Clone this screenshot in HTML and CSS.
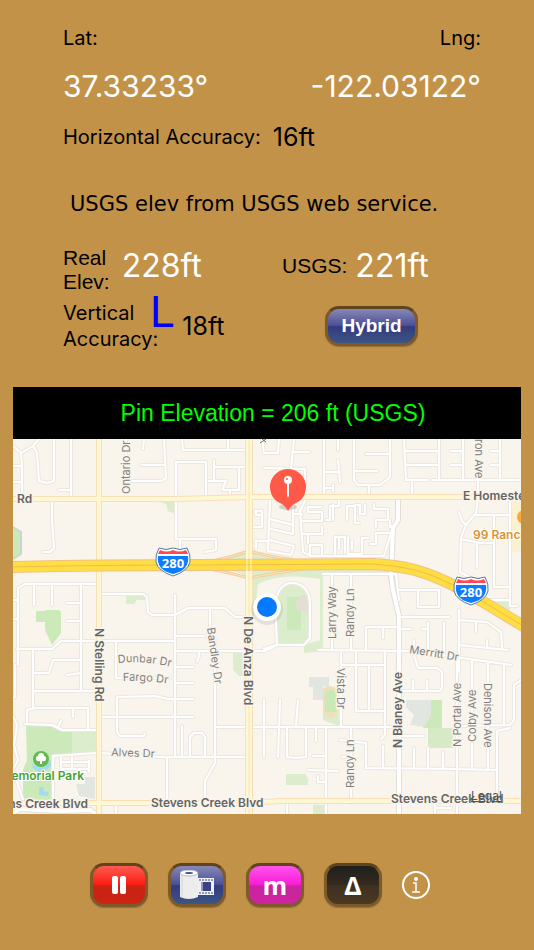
FILE: index.html
```html
<!DOCTYPE html>
<html lang="en">
<head>
    <meta charset="utf-8">
    <meta name="viewport" content="width=device-width, initial-scale=1">
    <title>Elevation</title>
    <link rel="stylesheet" href="styles.css">
</head>
<body>
    <main class="readings">
        <div class="row row-labels">
            <span>Lat:</span>
            <span>Lng:</span>
        </div>
        <div class="row row-coords">
            <span>37.33233°</span>
            <span>-122.03122°</span>
        </div>
        <div class="row-accuracy">
            <span class="label">Horizontal Accuracy:</span>
            <span class="small-value">16ft</span>
        </div>

        <p class="message">USGS elev from USGS web service.</p>

        <div class="elev-grid">
            <div class="reading real">
                <span class="label helvetica">Real<br>Elev:</span>
                <span class="value">228ft</span>
            </div>
            <div class="reading usgs">
                <span class="label helvetica">USGS:</span>
                <span class="value">221ft</span>
            </div>
            <div class="reading vertical">
                <span class="label">Vertical<br>Accuracy:</span>
                <span class="level">L</span>
                <span class="small-value">18ft</span>
            </div>
            <div class="reading map-type">
                <button type="button" class="btn btn-blue btn-hybrid">Hybrid</button>
            </div>
        </div>
    </main>

    <section class="map-box">
        <div class="banner">Pin Elevation = 206 ft (USGS)</div>
        <svg class="map" viewBox="13 439 508 375" role="img" aria-label="Map">
            <defs>
                <path id="streets" d="
                    M13 446L21 453L22 466V497M13 466H22M13 482H22M21 453L33 446L39 439M33 446L37 453L39 481L47 483L54 481V439
                    M71 439V499M59 490H71M126 439V499M144 439L143 449M164 439L166 478L162 481H130M141 465H165
                    M182 439L183 450H246M228 439V449M176 539V462H206V497M176 539H216V550L205 552M180 539V552
                    M214 460V481M209 481H226L223 488V490H239V467M214 467H246M230 490V497
                    M52 501V520L54 548L50 552H43
                    M262 439L264 453H278L279 439M264 468L305 469V485M294 439L291 468M292 452H309
                    M324 439V496M324 472H338M338 460L340 482M338 439V450M324 488H332M333 485V491
                    M354 439V480L358 485H380L390 477V439M366 454H390M354 471H377M369 485V496
                    M404 439L406 480H427M406 451H438M406 465H438M439 439V479M432 480H521M412 480V496
                    M463 439V480M451 451H463M451 465H463M500 439V480M491 451H500M491 465H500
                    M478 480V498L476 513L466 525L461 538L460 572L475 580M459 512L462 521L466 525M476 515H510
                    M461 539L480 543H493M477 542V567M494 515V587H510M510 500V606H517M490 600H510
                    M250 527H262V511H255M256 511V515H260M256 540V548M256 541H267M270 500L268 551L291 555L294 546L269 540
                    M270 519L293 525M271 529L293 534V505M293 514H302M306 499L300 511L303 552L310 556H384L393 527
                    M301 521H322V512H308V507H321M308 543V534H303M304 534H322V527M310 556V545H322V555
                    M339 499V506H330V520H326M333 505V520M347 506H355V523H359M347 506V520M365 505V514H360V505H355
                    M376 527V520H388V509H374V504M390 520V527L395 525M390 533H376V544H370
                    M335 554V537H345V553M339 537V549M348 537V554H362V538H368M352 550V541
                    M323 574H396L399 600M332 574V650M351 574V650M318 650L400 651M341 651V727M385 651V735L381 739
                    M341 665H385M366 650V627H399M383 627V638M399 629H411M399 590H439V607H418V590M399 617H449
                    M428 623V652M422 629H428M444 623V655M414 640V651M399 651H414L462 658L511 665
                    M459 610V672M459 620L487 622L501 632L502 648M476 622V632M459 645L508 650M487 640V648
                    M264 649L277 645L275 605C276 590 284 583 292 583C304 583 310 592 310 605V638L304 645H277
                    M264 727H400M278 757L280 700M296 726L298 700M287 727V757L296 758L306 757V727M316 727V741M264 700V757
                    M326 727V814M313 756H326M308 770L338 771M318 776V782H326M351 727V803M340 740L366 743V768L456 769L495 770
                    M383 746V768M342 757H351M356 651V711H384M369 665V711M399 691H440L442 687V672L437 668H418L414 655
                    M413 681V691M427 681V691M399 736H423M414 748V769M428 748V768M443 752V768M457 657V814
                    M472 660V770M488 662V770M504 665V725M459 726L510 725L514 720V685L521 680M497 800V731L510 728
                    M287 805V814M435 803V814M435 808H451
                    M102 717H193M116 641V678H170M117 732V697L155 696L168 699H193M117 732L120 736H143L145 734
                    M101 753L160 757H246M175 595V756M175 683H193M175 667H193M182 726V756M190 756V737L194 733H202L205 737V756
                    M167 757V800M215 640V763L205 781V800M216 727H264M33 650V708M33 691H97M27 722V710L35 708H88V729
                    M73 708V717M25 724L52 725L62 730H97M58 727L61 721M67 675L81 673M34 673H49L53 660H81M15 665V697L13 698
                    M53 800V756L97 753M61 757V769H89V761M61 762H89M72 757V769M89 769V772
                    M13 716L17 725L14 745L18 760L13 770L18 785L23 800M116 805V814
                    M97 584H25L18 588V665M13 600H17M13 619H17M34 585V605M52 585V605M81 585V691M67 603H81M67 621H81
                    M17 649H52L61 641H175M101 594H143L147 597L148 612L152 615H175L188 608H225L235 617H246
                    M210 608V640M175 636H204M175 651H265L277 645M199 651V656L197 662"/>
                <path id="collectors" d="M398 498V520L393 528L391 575L393 590L399 616V814M13 813L20 809L60 811L90 810L96 814"/>
                <path id="arterials" d="M13 499H176L249 497H521M99 439V814M13 803H249L280 801H521"/>
                <path id="deanza" d="M249 439V814"/>
                <path id="ramps" d="M205 563Q235 556 249 551Q275 558 310 562M205 568Q235 574 249 578Q275 573 310 568"/>
                <path id="freeway" d="M13 567Q100 565 200 565L372 564Q395 565 415 570C450 580 475 597 525 627"/>
                <path id="dunbar" d="M118 663Q146 660 176 668"/>
                <path id="fargo" d="M123 681Q146 680 170 684"/>
                <g id="shield">
                    <path d="M-14 -14Q-7 -11 0 -14Q7 -11 14 -14Q18 -7 17 0Q15 9 0 14Q-15 9 -17 0Q-18 -7 -14 -14Z" fill="#fff" stroke="#5877a8" stroke-width="1"/>
                    <path d="M-15 -6H15Q17 8 0 12Q-17 8 -15 -6Z" fill="#0b7bff"/>
                    <path d="M-13 -12Q-6 -9 0 -12Q6 -9 13 -12L15 -8H-15Z" fill="#fb4a55"/>
                    <text y="6" class="shield-text">280</text>
                </g>
            </defs>

            <rect x="13" y="439" width="508" height="375" fill="#f9f4ec"/>

            <!-- parks and grounds -->
            <g fill="#dcedcd">
                <path d="M154 501H175V514L168 511L166 504Z"/>
                <path d="M126 594H146V600H137L134 604H126Z"/>
                <path d="M215 563L249 552L310 562V569L249 577Z"/>
                <path d="M253 570H390V574H323V651L304 653V645L320 640V579Q280 572 258 584L254 618H253Z"/>
                <path d="M275 600Q279 584 292 584Q308 586 309 604V637L304 644H278Z"/>
                <path d="M387 575H397V598H393Z"/>
                <path d="M491 601H510V610L497 606Z"/>
                <path d="M72 730H97V753H72Z"/>
                <path d="M233 651H246V676H239L233 670Z"/>
                <path d="M286 774H305L308 779V785H286Z"/>
                <path d="M323 710H339V726L323 720Z"/>
                <path d="M313 805H324V814H313Z"/>
            </g>
            <g fill="#cce9b9">
                <path d="M13 528L20 532V554L13 559Z"/>
                <path d="M36 611H45V610H59L61 612V633L52 645L45 630V622H36Z"/>
                <path d="M287 597H301V630H287Z"/>
                <path d="M431 700H442V728H453V748H428V728H423Z"/>
                <path d="M26 725H53L62 731H72V755H53V800H23V770L27 760Z"/>
            </g>
            <path d="M428 728H453V748H428Z" fill="#d5eac5"/>
            <path d="M13 527L21 532V554L13 559" fill="none" stroke="#cbd5cd" stroke-width="2"/>
            <g fill="#e1e6e0">
                <path d="M309 677H329V688L323 686V700H313V687H309Z"/>
                <path d="M406 700H431V715L424 727L410 725L414 715L406 707Z"/>
                <path d="M76 784H85V777H95V799L79 796Z"/>
            </g>
            <path d="M323 688L330 686L337 688V715L331 719L323 714Z" fill="#eee0ba"/>
            <path d="M325 693L331 689L336 693V712H325Z" fill="#c9e9b5"/>
            <path d="M301 595H309V613L297 610L295 604Z" fill="#e5ded4"/>
            <path d="M511 499H521V552H511Z" fill="#fbf0cf"/>
            <path d="M32 763Q42 772 51 760L52 764Q43 778 33 768ZM39 787H44L43 791L49 792L48 796L39 795Z" fill="#a2dcee"/>

            <!-- roads: casing first, then the surface -->
            <g fill="none" stroke-linejoin="round" stroke-linecap="round">
                <use href="#streets" stroke="#ebe7e1" stroke-width="4"/>
                <use href="#collectors" stroke="#e2ded8" stroke-width="6"/>
                <use href="#streets" stroke="#ffffff" stroke-width="2"/>
                <use href="#collectors" stroke="#ffffff" stroke-width="4"/>
                <use href="#arterials" stroke="#f9dfb8" stroke-width="6"/>
                <use href="#deanza" stroke="#f9dfb8" stroke-width="8"/>
                <use href="#ramps" stroke="#f5cc98" stroke-width="3"/>
                <use href="#ramps" stroke="#fbe6ba" stroke-width="1"/>
                <use href="#arterials" stroke="#fff8d3" stroke-width="4"/>
                <use href="#deanza" stroke="#fff8d3" stroke-width="6"/>
                <use href="#deanza" stroke="#f6e4bb" stroke-width="1"/>
                <use href="#freeway" stroke="#f2c184" stroke-width="12"/>
                <use href="#freeway" stroke="#ffde43" stroke-width="10"/>
                <use href="#freeway" stroke="#efbd4b" stroke-width="1"/>
                <path d="M247 439V814M251 439V814" stroke="#fff8d3" stroke-width="1"/>
            </g>

            <!-- street names -->
            <g class="street">
                <text transform="translate(130 494) rotate(-90)">Ontario Dr</text>
                <text transform="translate(475 439) rotate(90)">ron Ave</text>
                <text transform="translate(336 639) rotate(-90)">Larry Way</text>
                <text transform="translate(354 637) rotate(-90)">Randy Ln</text>
                <text transform="translate(354 788) rotate(-90)">Randy Ln</text>
                <text transform="translate(337 668) rotate(90)">Vista Dr</text>
                <text transform="translate(207 628) rotate(82)">Bandley Dr</text>
                <text transform="translate(461 747) rotate(-90)">N Portal Ave</text>
                <text transform="translate(476 742) rotate(-90)">Colby Ave</text>
                <text transform="translate(484 683) rotate(90)">Denison Ave</text>
                <text transform="translate(409 653) rotate(9)">Merritt Dr</text>
                <text transform="translate(111 756) rotate(2)">Alves Dr</text>
                <text><textPath href="#dunbar">Dunbar Dr</textPath></text>
                <text><textPath href="#fargo">Fargo Dr</textPath></text>
            </g>
            <g class="street street-major">
                <text x="17" y="503">Rd</text>
                <text x="463" y="500">E Homestead Rd</text>
                <text transform="translate(95 628) rotate(90)">N Stelling Rd</text>
                <text transform="translate(244 616) rotate(90)">N De Anza Blvd</text>
                <text transform="translate(402 748) rotate(-90)">N Blaney Ave</text>
                <text x="88" y="808" text-anchor="end">Stevens Creek Blvd</text>
                <text x="151" y="807">Stevens Creek Blvd</text>
                <text x="391" y="803">Stevens Creek Blvd</text>
            </g>
            <path d="M260 443L266 439M262 439L266 442" stroke="#6d6d6d" stroke-width="1"/>
            <text x="84" y="780" text-anchor="end" class="place park-name">Memorial Park</text>
            <text x="473" y="539" class="place shop-name">99 Ranch</text>
            <text x="471" y="800" class="legal">Legal</text>

            <circle cx="524" cy="517" r="7" fill="#f6ac38"/>
            <circle cx="41" cy="759" r="8" fill="#62b94e"/>
            <path d="M40 764V761Q36 762 36 758Q36 756 38 756Q38 753 41 753Q44 753 44 756Q46 756 46 759Q46 762 42 761V764Z" fill="#fff"/>

            <use href="#shield" x="173" y="562"/>
            <use href="#shield" x="471" y="591"/>

            <!-- current position -->
            <circle cx="267" cy="609" r="16" fill="#000" opacity=".08"/>
            <circle cx="267" cy="607" r="14" fill="#fff"/>
            <circle cx="267" cy="607" r="10" fill="#067aff"/>

            <!-- dropped pin -->
            <ellipse cx="288" cy="507" rx="9" ry="3" fill="#000" opacity=".15"/>
            <path d="M288 469A18 18 0 0 1 297 502.600Q291 505 288 511Q285 505 279 502.600A18 18 0 0 1 288 469Z" fill="#ff5a48"/>
            <circle cx="288" cy="480" r="4" fill="#fff"/>
            <circle cx="287" cy="479" r="1" fill="#ff5a48"/>
            <path d="M287 483H289V495L288 498L287 495Z" fill="#fff"/>
        </svg>
    </section>

    <nav class="toolbar">
        <button type="button" class="btn btn-red" aria-label="Pause">
            <svg width="14" height="18" viewBox="0 0 14 18">
                <rect width="6" height="18" rx="2" fill="#fff"/>
                <rect x="8" width="6" height="18" rx="2" fill="#fff"/>
            </svg>
        </button>
        <button type="button" class="btn btn-blue" aria-label="Photos">
            <svg width="34" height="30" viewBox="0 0 34 30">
                <path d="M17 8H34V25H17Z" fill="#eef0f5"/>
                <path d="M21 12H31V21H21Z" fill="#3b4284"/>
                <path d="M19 10H34M19 23H34" stroke="#3b4284" stroke-width="1" stroke-dasharray="2 1"/>
                <path d="M22 12V21" stroke="#eef0f5"/>
                <path d="M0 3V27Q9 31 18 27V3Z" fill="#ededed"/>
                <path d="M2 5V28" stroke="#d2d2d8" stroke-width="1"/>
                <ellipse cx="9" cy="3" rx="9" ry="3" fill="#fff" stroke="#b6b8c8"/>
                <ellipse cx="9" cy="3" rx="4" ry="1" fill="#4b5087"/>
            </svg>
        </button>
        <button type="button" class="btn btn-pink">m</button>
        <button type="button" class="btn btn-black">Δ</button>
        <button type="button" class="btn-info" aria-label="Info">
            <svg width="28" height="28" viewBox="0 0 28 28" fill="none" stroke="#fff">
                <circle cx="14" cy="14" r="13" stroke-width="2"/>
                <circle cx="14" cy="8" r="2" fill="#fff" stroke="none"/>
                <path d="M11 12H14V21M10 21H18" stroke-width="1.500"/>
            </svg>
        </button>
    </nav>
</body>
</html>
```
FILE: styles.css
```css
body {
    margin: 0;
    background-color: #c29249;
    color: #000;
    font-family: Inter, "Liberation Sans", sans-serif;
}

.readings {
    padding: 22px 53px 0 63px;
    font-size: 20px;
}

.row {
    display: flex;
    justify-content: space-between;
}

.row-labels {
    line-height: 32px;
}

.row-coords {
    margin-top: 12px;
    font-size: 30px;
    line-height: 40px;
    color: #fff;
}

.row-accuracy {
    display: flex;
    align-items: center;
    gap: 12px;
    margin-top: 11px;
    line-height: 40px;
}

.small-value {
    font-size: 25px;
}

.value {
    font-size: 32px;
    line-height: 40px;
    color: #fff;
}

.helvetica {
    font-family: "Liberation Sans", Helvetica, sans-serif;
    font-size: 21px;
}

.message {
    margin: 31px 0 26px;
    padding-left: 7px;
    font-family: "DejaVu Sans", Verdana, sans-serif;
    font-size: 21px;
    line-height: 32px;
}

.elev-grid {
    display: grid;
    grid-template-columns: 219px 1fr;
    row-gap: 6px;
}

.reading {
    display: flex;
    align-items: center;
    line-height: 24px;
}

.real {
    align-items: flex-start;
    gap: 12px;
}

.usgs {
    align-items: flex-start;
    gap: 8px;
    line-height: 40px;
}

.vertical {
    position: relative;
    gap: 24px;
    line-height: 26px;
}

/* blue marker overlaps the label */
.level {
    position: absolute;
    left: 87px;
    top: -4px;
    font-family: "Liberation Sans", Helvetica, sans-serif;
    font-size: 44px;
    line-height: 32px;
    color: #0000ff;
}

.map-type {
    padding-left: 43px;
}

.map-box {
    margin: 35px 13px 0;
}

.banner {
    background-color: #000;
    color: #00ff00;
    font-family: "Liberation Sans", Helvetica, sans-serif;
    font-size: 23px;
    line-height: 52px;
    padding-left: 12px;
    text-align: center;
}

.map {
    display: block;
    width: 100%;
    height: auto;
}

.street {
    font-size: 11px;
    fill: #808080;
    stroke: #f9f4ec;
    stroke-width: 3px;
    stroke-linejoin: round;
    paint-order: stroke;
}

.street-major {
    font-size: 12px;
    font-weight: 600;
    fill: #666;
}

.place {
    font-size: 12px;
    font-weight: 600;
    stroke: #fff;
    stroke-width: 2px;
    paint-order: stroke;
}

.park-name {
    fill: #43a336;
}

.shop-name {
    fill: #dc922f;
}

.legal {
    font-size: 12px;
    fill: #555;
    text-decoration: underline;
}

.shield-text {
    font-family: "Noto Sans", sans-serif;
    font-size: 13px;
    font-weight: 700;
    fill: #fff;
    text-anchor: middle;
}

.toolbar {
    display: flex;
    justify-content: center;
    align-items: center;
    gap: 20px;
    margin-top: 49px;
    padding: 0 14px 20px 0;
}

.btn {
    display: flex;
    align-items: center;
    justify-content: center;
    box-sizing: border-box;
    width: 58px;
    height: 44px;
    padding: 0;
    border: 3px solid #7d5a28;
    border-top-color: #60441b;
    border-radius: 14px;
    color: #fff;
    font-family: "Noto Sans", sans-serif;
    font-size: 25px;
    font-weight: 700;
    line-height: 24px;
    box-shadow: 0 1px 1px #93703a;
    cursor: pointer;
}

.btn-hybrid {
    width: 93px;
    height: 40px;
    font-family: "Liberation Sans", Helvetica, sans-serif;
    font-size: 19px;
}

.btn-red {
    background: linear-gradient(#ff5b51, #fb1b12 50%, #c92313 52%, #cd2414);
}

.btn-blue {
    background: linear-gradient(#8787b7, #4c5195 48%, #343a7e 52%, #3c5684);
}

.btn-pink {
    background: linear-gradient(#ff54ec, #f91ad8 50%, #c9239e 52%, #cc259f);
}

.btn-black {
    background: linear-gradient(#201f1c, #342b1e 50%, #40311e 52%, #483824);
}

.btn-info {
    display: flex;
    padding: 0;
    border: none;
    background: none;
    cursor: pointer;
}
```
